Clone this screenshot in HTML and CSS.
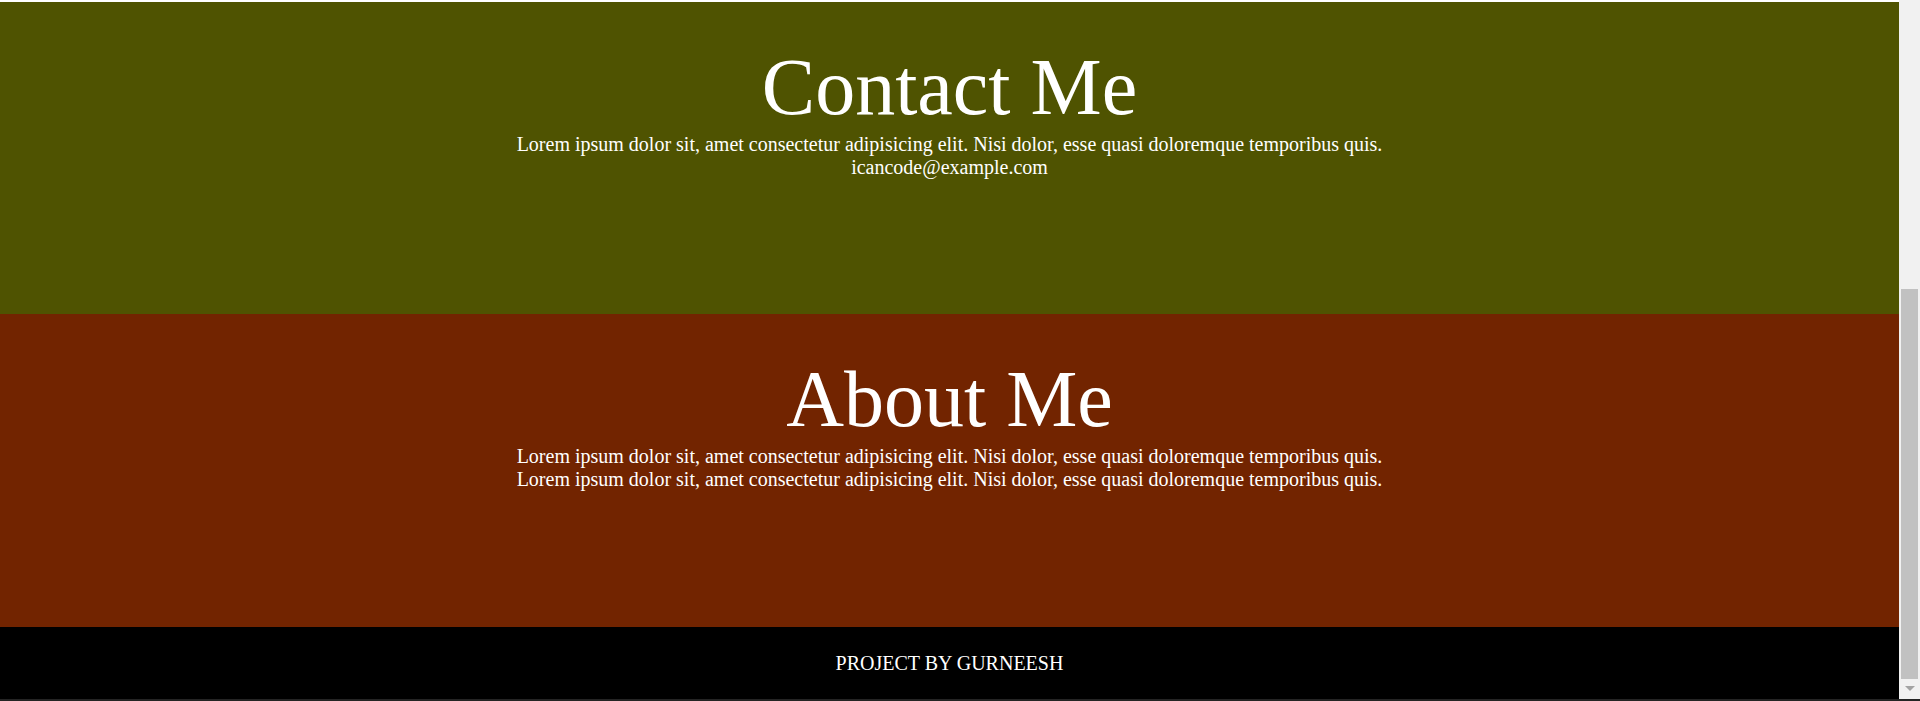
FILE: index.html
```html
<!DOCTYPE html>
<html lang="en">
<head>
<meta charset="utf-8">
<title>Project by Gurneesh</title>
<link rel="stylesheet" href="styles.css">
</head>
<body>
<div class="window">
  <div class="viewport">
    <div class="top-gap"></div>
    <section class="panel contact">
      <h1 class="panel-title">Contact Me</h1>
      <p class="panel-text">Lorem ipsum dolor sit, amet consectetur adipisicing elit. Nisi dolor, esse quasi doloremque temporibus quis.</p>
      <p class="panel-text">icancode@example.com</p>
    </section>
    <section class="panel about">
      <h1 class="panel-title">About Me</h1>
      <p class="panel-text">Lorem ipsum dolor sit, amet consectetur adipisicing elit. Nisi dolor, esse quasi doloremque temporibus quis.</p>
      <p class="panel-text">Lorem ipsum dolor sit, amet consectetur adipisicing elit. Nisi dolor, esse quasi doloremque temporibus quis.</p>
    </section>
    <footer class="site-footer">PROJECT BY GURNEESH</footer>
  </div>
  <div class="scrollbar">
    <div class="scroll-space"></div>
    <div class="scroll-thumb"></div>
    <div class="scroll-button"><span class="arrow-down"></span></div>
  </div>
</div>
<div class="frame-bottom"></div>
</body>
</html>
```
FILE: styles.css
```css
html, body {
  margin: 0;
  padding: 0;
  background: #ffffff;
}

body {
  font-family: "Liberation Serif", "Times New Roman", serif;
  height: 701px;
  overflow: hidden;
  display: flex;
  flex-direction: column;
}

.window {
  display: flex;
  flex-direction: row;
  height: 699px;
}

.viewport {
  flex: 1;
  display: flex;
  flex-direction: column;
}

.top-gap {
  height: 2px;
  background: #ffffff;
}

.panel {
  color: #ffffff;
  text-align: center;
  padding-top: 40px;
  box-sizing: border-box;
}

.contact {
  background: #4f5301;
  height: 312px;
}

.about {
  background: #722400;
  height: 313px;
}

.panel-title {
  font-size: 80px;
  font-weight: normal;
  margin: 0;
  line-height: normal;
}

.panel-text {
  font-size: 20px;
  margin: 0;
  line-height: normal;
}

.site-footer {
  background: #000000;
  color: #ffffff;
  height: 72px;
  font-size: 20px;
  display: flex;
  align-items: center;
  justify-content: center;
}

.scrollbar {
  width: 21px;
  background: #f1f1f1;
  display: flex;
  flex-direction: column;
  padding: 0 2px;
  box-sizing: border-box;
}

.scroll-space {
  height: 289px;
}

.scroll-thumb {
  height: 390px;
  background: #c1c1c1;
}

.scroll-button {
  height: 20px;
  display: flex;
  justify-content: center;
  padding-top: 7px;
  box-sizing: border-box;
}

.arrow-down {
  width: 0;
  height: 0;
  border-left: 5px solid transparent;
  border-right: 5px solid transparent;
  border-top: 5px solid #a3a3a3;
}

.frame-bottom {
  height: 2px;
  background: #242424;
}
```
